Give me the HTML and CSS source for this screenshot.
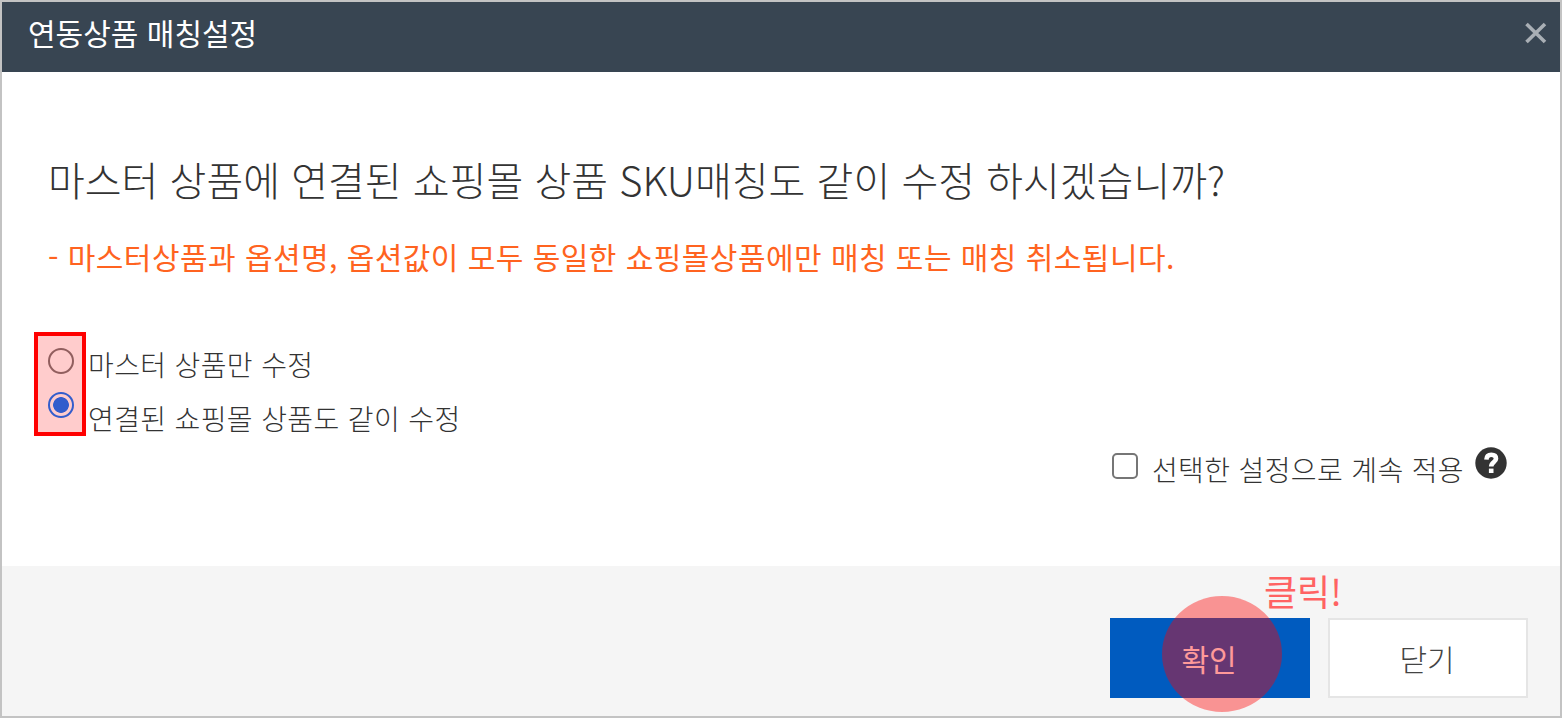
FILE: index.html
```
<!DOCTYPE html>
<html lang="ko">
<head>
    <meta charset="UTF-8">
    <meta name="viewport" content="width=device-width, initial-scale=1.0">
    <title>연동상품 매칭설정</title>
    <link rel="stylesheet" href="styles.css">
</head>
<body>
    <div class="popup">
        <header class="popup-header">
            <h1>연동상품 매칭설정</h1>
            <button class="close" aria-label="닫기">
                <svg width="24" height="22" viewBox="0 0 24 22"><path d="M2.5 2L21 20M21 2L2.5 20" stroke="#a9afb5" stroke-width="3.6" fill="none"/></svg>
            </button>
        </header>
        <main class="popup-body">
            <h2>마스터 상품에 연결된 쇼핑몰 상품 SKU매칭도 같이 수정 하시겠습니까?</h2>
            <p class="notice">- 마스터상품과 옵션명, 옵션값이 모두 동일한 쇼핑몰상품에만 매칭 또는 매칭 취소됩니다.</p>
            <div class="options">
                <div class="radios">
                    <input type="radio" name="target" id="master">
                    <input type="radio" name="target" id="linked" checked>
                    <div class="highlight"></div>
                </div>
                <div class="labels">
                    <label for="master">마스터 상품만 수정</label>
                    <label for="linked">연결된 쇼핑몰 상품도 같이 수정</label>
                </div>
            </div>
            <div class="keep">
                <input type="checkbox" id="keep">
                <label for="keep">선택한 설정으로 계속 적용</label>
                <svg class="help" width="32" height="32" viewBox="0 0 32 32">
                    <circle cx="16" cy="16" r="15.7" fill="#333"/>
                    <path d="M11.4 12.6C11.6 9.2 13.4 7.8 16.3 7.8C19.4 7.8 21 9.3 21 11.7C21 15 16.2 15 16.2 19.6" stroke="#fff" stroke-width="4.6" fill="none"/>
                    <rect x="13.9" y="21.6" width="4.6" height="4.4" fill="#fff"/>
                </svg>
            </div>
        </main>
        <footer class="popup-footer">
            <button class="btn btn-ok">확인<span class="click-mark"></span><span class="click-text">클릭!</span></button>
            <button class="btn btn-close">닫기</button>
        </footer>
    </div>
</body>
</html>
```

FILE: styles.css
```
* {
    box-sizing: border-box;
}
body {
    margin: 0;
    font-family: 'Noto Sans CJK KR', sans-serif;
    font-weight: 300;
    color: #333;
}
h1, h2, p {
    margin: 0;
    font-weight: 300;
    white-space: nowrap;
}
button {
    font-family: inherit;
    cursor: pointer;
}
input {
    appearance: none;
    display: block;
    margin: 0;
    width: 26px;
    height: 26px;
    border: 2px solid #767676;
    background: #fff;
}
.popup {
    display: flex;
    flex-direction: column;
    width: 100%;
    height: 718px;
    border: 2px solid #c3c3c3;
    background: #fff;
}
.popup-header {
    display: flex;
    justify-content: space-between;
    align-items: center;
    height: 70px;
    padding: 0 12px 8px 26px;
    background: #384552;
    color: #fff;
}
.popup-header h1 {
    margin-top: -2px;
    font-size: 30px;
    line-height: 40px;
    font-weight: 400;
}
.close {
    padding: 0;
    border: 0;
    background: none;
    line-height: 0;
}
.popup-body {
    flex: 1;
    padding: 77px 53px 0 46px;
}
.popup-body h2 {
    font-size: 40px;
    line-height: 60px;
}
.notice {
    margin-top: 25px;
    font-size: 30px;
    line-height: 44px;
    letter-spacing: 0.45px;
    font-weight: 400;
    color: #ff6320;
}
.options {
    display: flex;
    margin-top: 54px;
}
.radios {
    position: relative;
    display: flex;
    flex-direction: column;
    gap: 18px;
    width: 40px;
    height: 104px;
    padding-top: 16px;
}
.radios input {
    border-radius: 50%;
}
.radios input:checked {
    border-color: #0075ff;
    background: radial-gradient(circle, #0075ff 7.5px, #fff 8.2px);
}
.highlight {
    position: absolute;
    top: 0;
    left: -14px;
    width: 52px;
    height: 104px;
    border: 4px solid #f00;
    background: rgba(255, 0, 0, 0.2);
    pointer-events: none;
}
.labels {
    display: flex;
    flex-direction: column;
    gap: 14px;
    height: 104px;
    padding-top: 12px;
    font-size: 28px;
    line-height: 40px;
    letter-spacing: 0.37px;
}
.keep {
    display: flex;
    justify-content: flex-end;
    align-items: center;
    height: 54px;
    font-size: 28px;
    line-height: 40px;
    letter-spacing: 0.37px;
}
.keep input {
    margin: 6px 14px 0 0;
    border-radius: 5px;
}
.keep label {
    padding-top: 11px;
}
.help {
    margin-left: 11px;
}
.popup-footer {
    display: flex;
    justify-content: flex-end;
    gap: 18px;
    height: 150px;
    padding: 52px 32px 0 0;
    background: #f5f5f5;
}
.btn {
    position: relative;
    width: 200px;
    height: 80px;
    padding: 0 2px 0 0;
    border: 0;
    font-size: 30px;
}
.btn-ok {
    background: #005bbf;
    color: #fff;
}
.btn-close {
    border: 2px solid #e5e5e5;
    background: #fff;
    color: #444;
    font-weight: 300;
}
.click-mark {
    position: absolute;
    top: -22px;
    left: 52px;
    width: 120px;
    height: 116px;
    border-radius: 50%;
    background: rgba(255, 0, 0, 0.4);
}
.click-text {
    position: absolute;
    top: -54px;
    left: 154px;
    font-size: 36px;
    line-height: 52px;
    white-space: nowrap;
    color: #ff6262;
}
```
